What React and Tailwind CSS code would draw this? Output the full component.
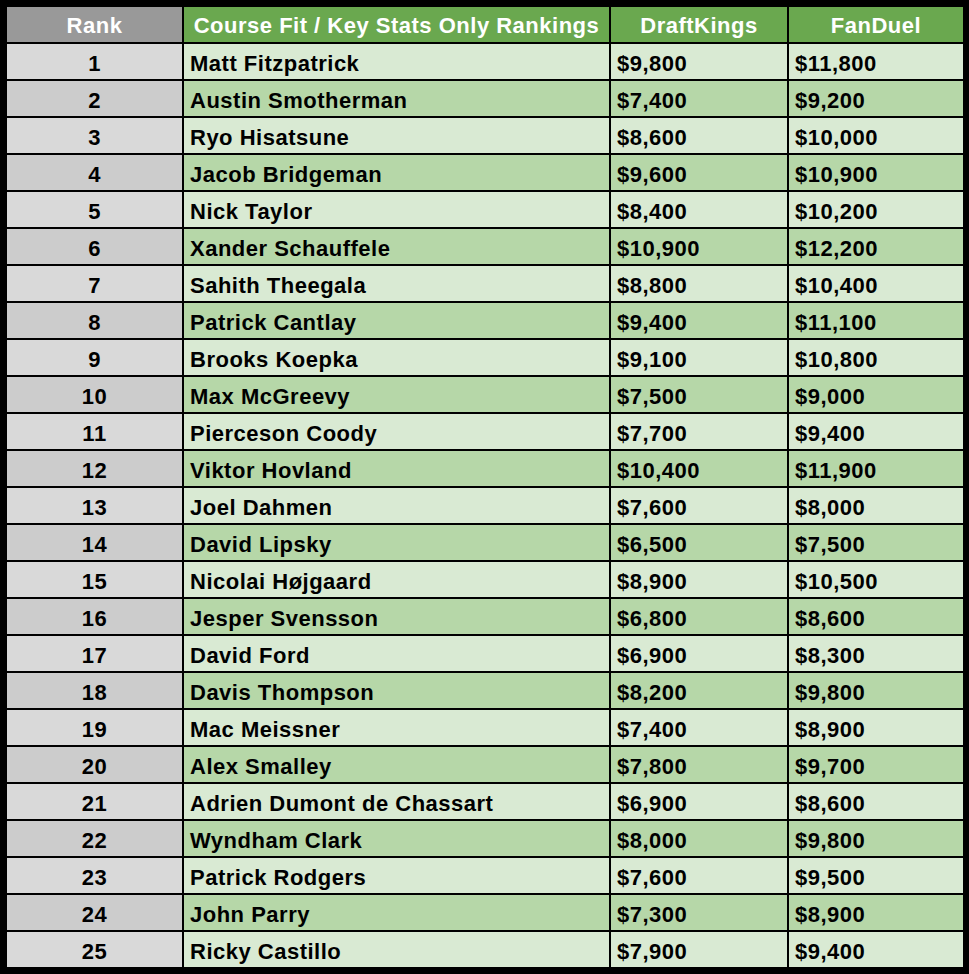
const players = [
  ["Matt Fitzpatrick", "$9,800", "$11,800"],
  ["Austin Smotherman", "$7,400", "$9,200"],
  ["Ryo Hisatsune", "$8,600", "$10,000"],
  ["Jacob Bridgeman", "$9,600", "$10,900"],
  ["Nick Taylor", "$8,400", "$10,200"],
  ["Xander Schauffele", "$10,900", "$12,200"],
  ["Sahith Theegala", "$8,800", "$10,400"],
  ["Patrick Cantlay", "$9,400", "$11,100"],
  ["Brooks Koepka", "$9,100", "$10,800"],
  ["Max McGreevy", "$7,500", "$9,000"],
  ["Pierceson Coody", "$7,700", "$9,400"],
  ["Viktor Hovland", "$10,400", "$11,900"],
  ["Joel Dahmen", "$7,600", "$8,000"],
  ["David Lipsky", "$6,500", "$7,500"],
  ["Nicolai Højgaard", "$8,900", "$10,500"],
  ["Jesper Svensson", "$6,800", "$8,600"],
  ["David Ford", "$6,900", "$8,300"],
  ["Davis Thompson", "$8,200", "$9,800"],
  ["Mac Meissner", "$7,400", "$8,900"],
  ["Alex Smalley", "$7,800", "$9,700"],
  ["Adrien Dumont de Chassart", "$6,900", "$8,600"],
  ["Wyndham Clark", "$8,000", "$9,800"],
  ["Patrick Rodgers", "$7,600", "$9,500"],
  ["John Parry", "$7,300", "$8,900"],
  ["Ricky Castillo", "$7,900", "$9,400"],
];

export default function App() {
  return (
    <div className="w-[969px] h-[974px] bg-black pt-[7px] pl-[7px] pr-[6px] pb-[7px] font-['Liberation_Sans',Arial,sans-serif] font-bold text-[22px] leading-none tracking-[0.5px]">
      <div className="grid grid-cols-[175px_425px_176px_174px] auto-rows-[35px] gap-[2px]">
        <div className="bg-[#999999] text-white flex items-center justify-center pt-[2px]">Rank</div>
        <div className="bg-[#6aa84f] text-white flex items-center justify-center pt-[2px]">
          Course Fit / Key Stats Only Rankings
        </div>
        <div className="bg-[#6aa84f] text-white flex items-center justify-center pt-[2px]">DraftKings</div>
        <div className="bg-[#6aa84f] text-white flex items-center justify-center pt-[2px]">FanDuel</div>

        {players.map(([name, dk, fd], i) => {
          const odd = i % 2 === 1;
          const green = odd ? "bg-[#b6d7a8]" : "bg-[#d9ead3]";
          return [
            <div
              key={`r${i}`}
              className={`${odd ? "bg-[#cccccc]" : "bg-[#d9d9d9]"} text-black flex items-center justify-center pt-[4px]`}
            >
              {i + 1}
            </div>,
            <div key={`n${i}`} className={`${green} text-black flex items-center pl-[6px] pt-[4px]`}>
              {name}
            </div>,
            <div key={`d${i}`} className={`${green} text-black flex items-center pl-[6px] pt-[4px]`}>
              {dk}
            </div>,
            <div key={`f${i}`} className={`${green} text-black flex items-center pl-[6px] pt-[4px]`}>
              {fd}
            </div>,
          ];
        })}
      </div>
    </div>
  );
}
